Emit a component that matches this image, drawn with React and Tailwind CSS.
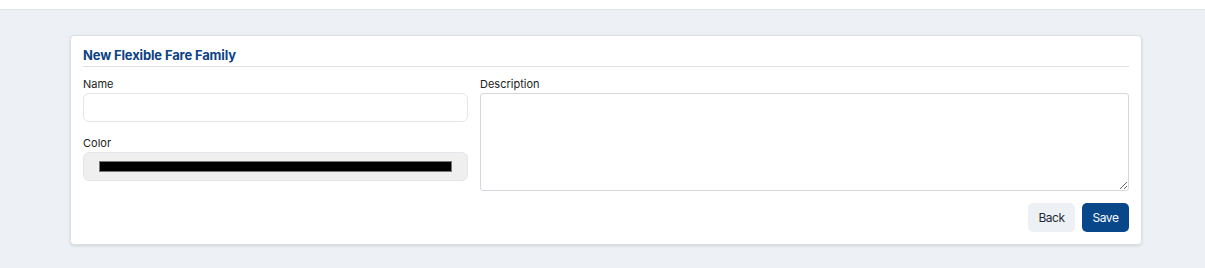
export default function App() {
  return (
    <div className="w-[1205px] h-[268px] bg-[#edf1f5] flex flex-col" style={{ fontFamily: 'Inter, "Noto Sans", sans-serif' }}>
      <div className="h-[10px] bg-white border-b border-[#e1e5ea] shrink-0"></div>
      <div className="pl-[70px] pr-[63px] pt-[25px]">
        <div className="bg-white border border-[#dcdfe3] rounded-[4px] shadow-[0_1px_3px_rgba(0,0,0,0.12)] px-[12px] pt-[10px] pb-[12px]">
          <div className="text-[13px] font-bold text-[#0d4285] leading-[18px] pb-[2px] border-b border-[#dcdfe3] tracking-[-0.15px]">New Flexible Fare Family</div>
          <div className="flex gap-[12px] mt-[10px]">
            <div className="w-[385px] flex flex-col">
              <label className="text-[11px] leading-[14px] text-[#222] mb-[2px]">Name</label>
              <input className="h-[29px] rounded-[6px] border border-[#e3e6ea] outline-none px-2 text-[12px]" />
              <label className="text-[11px] leading-[14px] text-[#222] mt-[14px] mb-[2px]">Color</label>
              <div className="h-[29px] rounded-[6px] border border-[#e3e6ea] bg-[#efefef] flex items-center px-[15px]">
                <div className="h-[11px] w-full bg-black border border-[#777]"></div>
              </div>
            </div>
            <div className="flex-1 flex flex-col">
              <label className="text-[11px] leading-[14px] text-[#222] mb-[2px]">Description</label>
              <textarea className="h-[98px] rounded-[3px] border border-[#d4d7db] outline-none p-2 text-[12px]"></textarea>
            </div>
          </div>
          <div className="flex justify-end gap-[7px] mt-[12px]">
            <button className="h-[29px] w-[47px] rounded-[5px] bg-[#edf1f5] text-[#1f2a37] text-[12px] tracking-[-0.5px]">Back</button>
            <button className="h-[29px] w-[47px] rounded-[5px] bg-[#08478a] text-white text-[12px] tracking-[-0.5px]">Save</button>
          </div>
        </div>
      </div>
    </div>
  );
}
